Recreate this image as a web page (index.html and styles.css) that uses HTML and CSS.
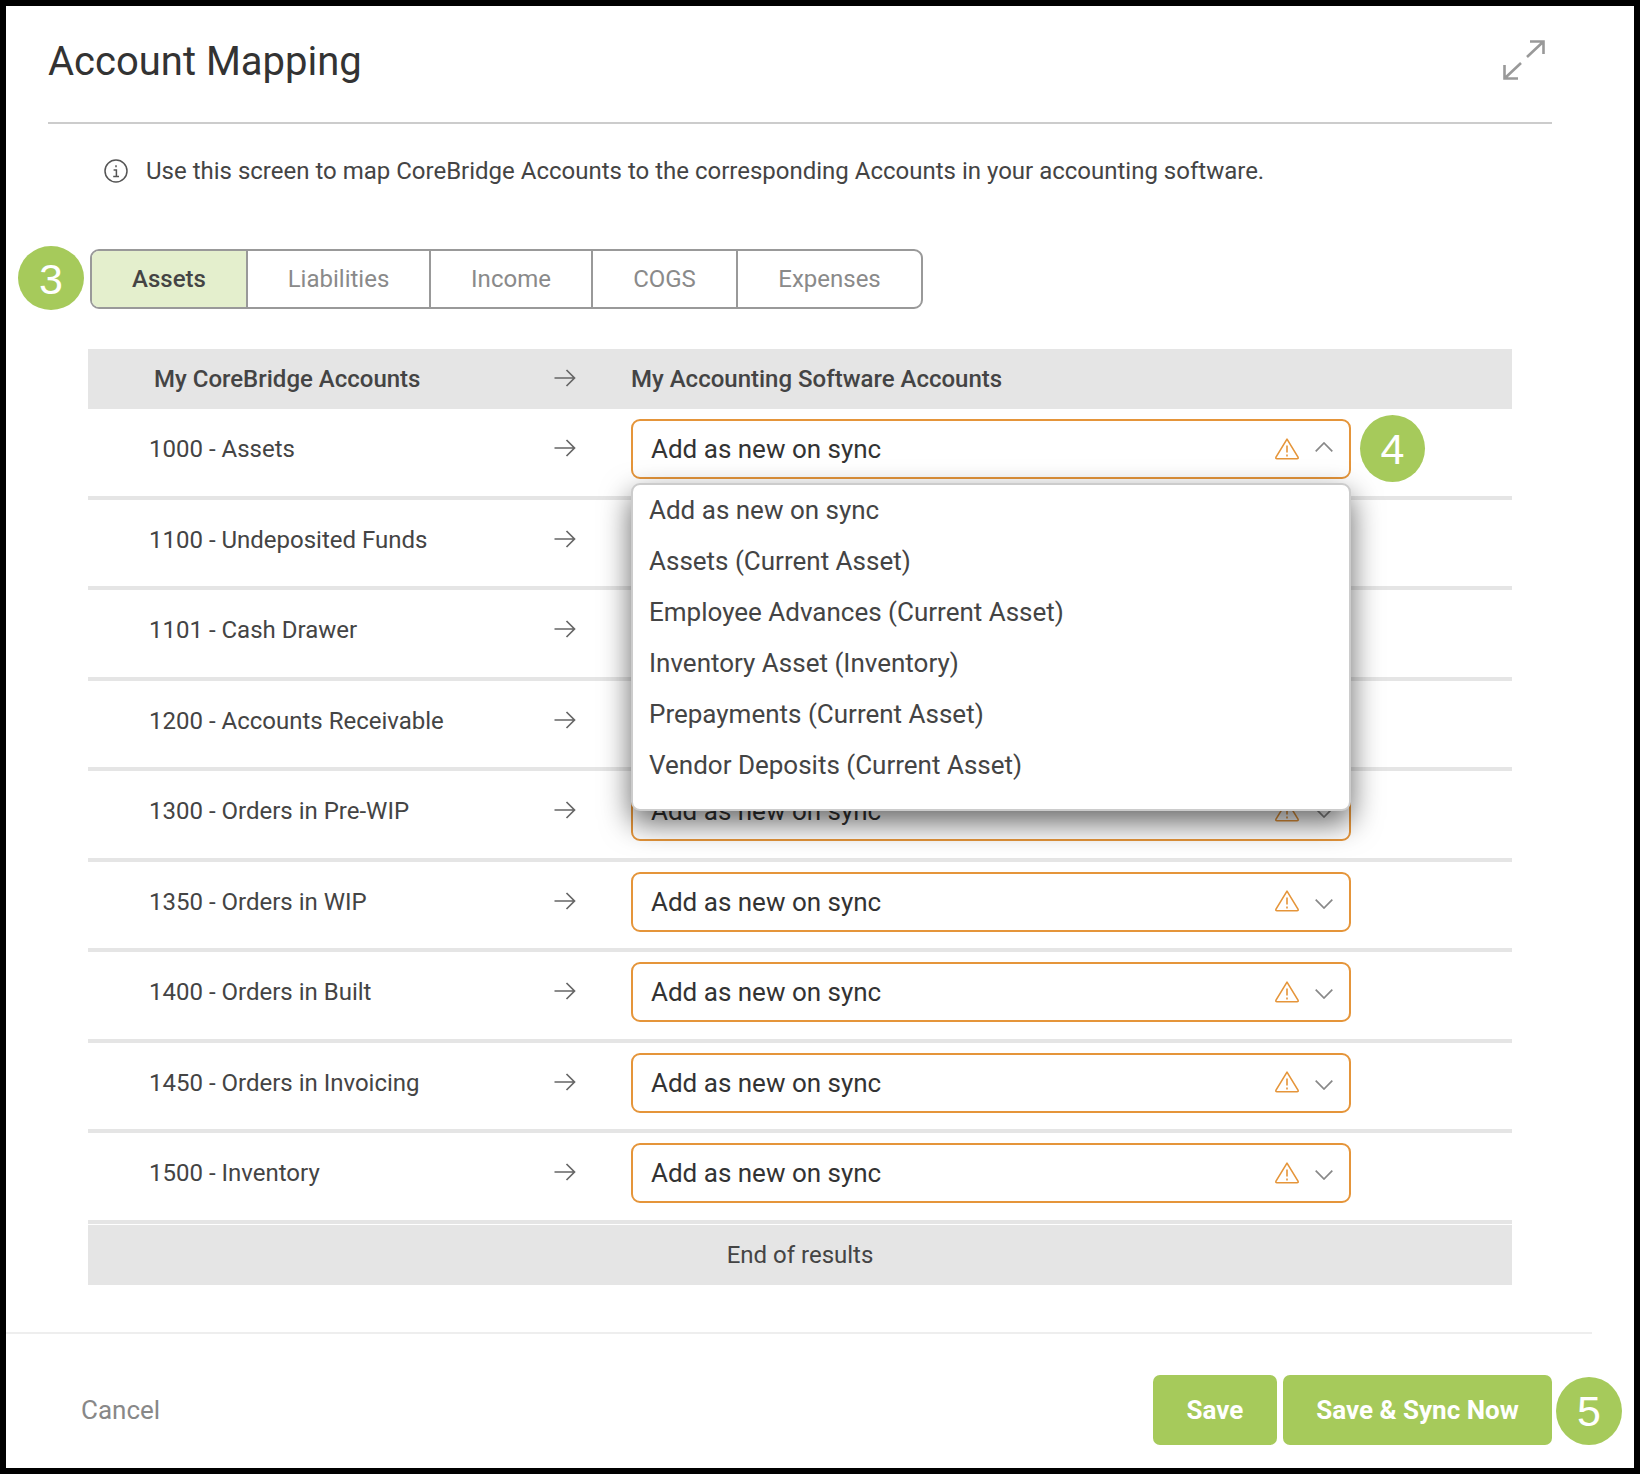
FILE: index.html
```html
<!DOCTYPE html>
<html lang="en">
<head>
<meta charset="utf-8">
<title>Account Mapping</title>
<link rel="stylesheet" href="styles.css">
</head>
<body>
<svg class="defs" width="0" height="0" aria-hidden="true">
  <symbol id="arrow" viewBox="0 0 22 18"><path d="M0.5 9H20.5M12.5 1L20.5 9L12.5 17" fill="none" stroke="currentColor" stroke-width="1.7"/></symbol>
  <symbol id="warn" viewBox="0 0 24 22"><path d="M12 1.2L23 19.2Q23.6 20.8 22 20.8H2Q0.4 20.8 1 19.2Z" fill="none" stroke="currentColor" stroke-width="1.6" stroke-linejoin="round"/><path d="M12 7.5V14.5M12 16.4V18.4" fill="none" stroke="currentColor" stroke-width="1.6"/></symbol>
  <symbol id="chev-down" viewBox="0 0 18 10"><path d="M0.7 0.7L9 9L17.3 0.7" fill="none" stroke="currentColor" stroke-width="1.7"/></symbol>
  <symbol id="chev-up" viewBox="0 0 18 10"><path d="M0.7 9.3L9 1L17.3 9.3" fill="none" stroke="currentColor" stroke-width="1.7"/></symbol>
</svg>
<main class="dialog">
  <header class="head">
    <h1 class="title">Account Mapping</h1>
    <svg class="expand" viewBox="0 0 42 41" aria-hidden="true"><path d="M27 2.5H40.5V15M40.5 2.5L24 18M1.5 26V39.5H15M1.5 39.5L18 24" fill="none" stroke="currentColor" stroke-width="2.6"/></svg>
  </header>
  <p class="info">
    <svg class="info-icon" viewBox="0 0 24 24" aria-hidden="true"><circle cx="12" cy="12" r="11" fill="none" stroke="currentColor" stroke-width="1.5"/><path d="M12 6.2V8.2M9.6 11H12.4V17.2M9.2 17.4H15" fill="none" stroke="currentColor" stroke-width="1.5"/></svg>
    Use this screen to map CoreBridge Accounts to the corresponding Accounts in your accounting software.
  </p>
  <div class="tabs-row">
    <span class="badge badge-3">3</span>
    <nav class="tabs">
      <span class="tab tab-assets active">Assets</span>
      <span class="tab tab-liab">Liabilities</span>
      <span class="tab tab-income">Income</span>
      <span class="tab tab-cogs">COGS</span>
      <span class="tab tab-exp">Expenses</span>
    </nav>
  </div>
  <section class="table">
    <div class="thead">
      <span class="th-left">My CoreBridge Accounts</span>
      <svg class="arrow"><use href="#arrow"/></svg>
      <span>My Accounting Software Accounts</span>
    </div>
    <div class="row">
      <span class="acct">1000 - Assets</span>
      <svg class="arrow"><use href="#arrow"/></svg>
      <div class="select-wrap">
        <div class="select"><span class="val">Add as new on sync</span><svg class="warn"><use href="#warn"/></svg><svg class="chev chev-open"><use href="#chev-up"/></svg></div>
        <ul class="menu">
          <li>Add as new on sync</li>
          <li>Assets (Current Asset)</li>
          <li>Employee Advances (Current Asset)</li>
          <li>Inventory Asset (Inventory)</li>
          <li>Prepayments (Current Asset)</li>
          <li>Vendor Deposits (Current Asset)</li>
        </ul>
        <span class="badge badge-4">4</span>
      </div>
    </div>
    <div class="row">
      <span class="acct">1100 - Undeposited Funds</span>
      <svg class="arrow"><use href="#arrow"/></svg>
    </div>
    <div class="row">
      <span class="acct">1101 - Cash Drawer</span>
      <svg class="arrow"><use href="#arrow"/></svg>
    </div>
    <div class="row">
      <span class="acct">1200 - Accounts Receivable</span>
      <svg class="arrow"><use href="#arrow"/></svg>
    </div>
    <div class="row">
      <span class="acct">1300 - Orders in Pre-WIP</span>
      <svg class="arrow"><use href="#arrow"/></svg>
      <div class="select-wrap"><div class="select"><span class="val">Add as new on sync</span><svg class="warn"><use href="#warn"/></svg><svg class="chev"><use href="#chev-down"/></svg></div></div>
    </div>
    <div class="row">
      <span class="acct">1350 - Orders in WIP</span>
      <svg class="arrow"><use href="#arrow"/></svg>
      <div class="select-wrap"><div class="select"><span class="val">Add as new on sync</span><svg class="warn"><use href="#warn"/></svg><svg class="chev"><use href="#chev-down"/></svg></div></div>
    </div>
    <div class="row">
      <span class="acct">1400 - Orders in Built</span>
      <svg class="arrow"><use href="#arrow"/></svg>
      <div class="select-wrap"><div class="select"><span class="val">Add as new on sync</span><svg class="warn"><use href="#warn"/></svg><svg class="chev"><use href="#chev-down"/></svg></div></div>
    </div>
    <div class="row">
      <span class="acct">1450 - Orders in Invoicing</span>
      <svg class="arrow"><use href="#arrow"/></svg>
      <div class="select-wrap"><div class="select"><span class="val">Add as new on sync</span><svg class="warn"><use href="#warn"/></svg><svg class="chev"><use href="#chev-down"/></svg></div></div>
    </div>
    <div class="row">
      <span class="acct">1500 - Inventory</span>
      <svg class="arrow"><use href="#arrow"/></svg>
      <div class="select-wrap"><div class="select"><span class="val">Add as new on sync</span><svg class="warn"><use href="#warn"/></svg><svg class="chev"><use href="#chev-down"/></svg></div></div>
    </div>
    <div class="end">End of results</div>
  </section>
  <footer class="foot">
    <span class="cancel">Cancel</span>
    <div class="actions">
      <button class="btn btn-save">Save</button>
      <button class="btn btn-sync">Save &amp; Sync Now</button>
      <span class="badge badge-5">5</span>
    </div>
  </footer>
</main>
</body>
</html>
```

FILE: styles.css
```css
* { box-sizing: border-box; }
html, body { margin: 0; padding: 0; }
body {
  width: 1640px;
  height: 1474px;
  padding: 6px 6px 6px;
  background: #000;
  font-family: Roboto, "Liberation Sans", sans-serif;
  color: #444;
  overflow: hidden;
}
.defs { position: absolute; }
.dialog {
  width: 1628px;
  height: 1462px;
  background: #fff;
  display: flex;
  flex-direction: column;
}
.head {
  margin: 0 82px 0 42px;
  height: 118px;
  border-bottom: 2px solid #ccc;
  position: relative;
}
.title {
  margin: 0;
  padding-top: 32px;
  font-size: 40px;
  line-height: 47px;
  font-weight: 400;
  color: #333;
}
.expand {
  position: absolute;
  right: 7px;
  top: 33px;
  width: 42px;
  height: 41px;
  color: #999;
}
.info {
  margin: 0;
  height: 92px;
  padding: 2px 0 0 98px;
  display: flex;
  align-items: center;
  gap: 18px;
  font-size: 24px;
  color: #444;
}
.info-icon { width: 24px; height: 24px; color: #555; flex: none; }
.tabs-row { margin: 33px 0 0 84px; position: relative; }
.tabs {
  display: inline-flex;
  height: 60px;
  border: 2px solid #999;
  border-radius: 9px;
  overflow: hidden;
  font-size: 24px;
  font-weight: 400;
  color: #8a8a8a;
}
.tab {
  display: flex;
  align-items: center;
  justify-content: center;
  border-right: 2px solid #999;
}
.tab:last-child { border-right: 0; }
.tab-assets { width: 156px; }
.tab-liab { width: 183px; }
.tab-income { width: 162px; }
.tab-cogs { width: 145px; }
.tab-exp { width: 183px; }
.active { background: #e4efcd; color: #444; font-weight: 500; }
.badge {
  position: absolute;
  display: flex;
  align-items: center;
  justify-content: center;
  width: 66px;
  border-radius: 50%;
  background: #a6ca5b;
  color: #fff;
  font-family: "Liberation Sans", Arial, sans-serif;
  font-size: 43px;
}
.badge-3 { left: -72px; top: -3px; height: 64px; padding-top: 2px; }
.badge-4 { left: 729px; top: -4px; height: 67px; z-index: 3; width: 65px; padding-top: 2px; }
.badge-5 { left: 403px; top: 2px; height: 68px; }
.table { margin: 40px 0 0 82px; width: 1424px; }
.thead {
  height: 60px;
  background: #e5e5e5;
  display: grid;
  grid-template-columns: 466px 77px 1fr;
  align-items: center;
  font-size: 24px;
  font-weight: 500;
  color: #444;
}
.th-left { padding-left: 66px; }
.arrow { width: 22px; height: 18px; color: #666; }
.thead .arrow { margin-top: -2px; }
.row {
  height: 90.5px;
  border-bottom: 4px solid #e5e5e5;
  padding-top: 10px;
  display: grid;
  grid-template-columns: 466px 77px 720px;
  align-items: start;
}
.row .arrow { margin-top: 20px; }
.acct {
  padding-left: 61px;
  line-height: 60px;
  font-size: 24px;
  color: #444;
}
.select-wrap { position: relative; }
.select {
  height: 60px;
  border: 2px solid #e5953a;
  border-radius: 9px;
  background: #fff;
  display: flex;
  align-items: center;
  padding: 0 16px 0 18px;
  font-size: 26px;
  color: #333;
}
.val { flex: 1; }
.warn { width: 24px; height: 22px; color: #e5953a; margin-top: -1px; }
.chev { width: 18px; height: 10px; color: #888; margin: 4px 0 0 16px; }
.chev-open { margin-top: -4px; }
.menu {
  position: absolute;
  left: 0;
  top: 64px;
  width: 720px;
  height: 328px;
  margin: 0;
  padding: 0 0 0 16px;
  list-style: none;
  background: #fff;
  border: 2px solid #ccc;
  border-radius: 9px;
  box-shadow: 0 12px 30px rgba(0, 0, 0, .6);
  z-index: 2;
  font-size: 26px;
  color: #444;
}
.menu li { height: 51px; line-height: 50px; }
.end {
  margin-top: 1.5px;
  height: 60px;
  background: #e5e5e5;
  display: flex;
  align-items: center;
  justify-content: center;
  font-size: 24px;
  color: #444;
}
.foot {
  margin-top: 47px;
  width: 1586px;
  border-top: 2px solid #eee;
  padding: 41px 0 0 75px;
  display: flex;
  justify-content: space-between;
  align-items: flex-start;
}
.cancel { line-height: 70px; font-size: 26px; font-weight: 400; color: #888; }
.actions { display: flex; gap: 6px; position: relative; margin-right: 40px; }
.btn {
  height: 70px;
  border: 0;
  border-radius: 7px;
  background: #a6ca5b;
  color: #fff;
  font-family: Roboto, "Liberation Sans", sans-serif;
  font-weight: 700;
  font-size: 26px;
  padding: 0;
}
.btn-save { width: 124px; }
.btn-sync { width: 269px; }
```
